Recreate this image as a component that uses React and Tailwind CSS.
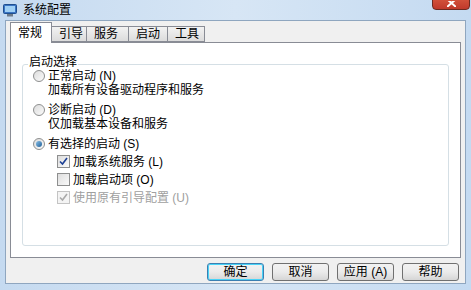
import React, { useState } from "react";

const font = { fontFamily: '"Liberation Sans", "Noto Sans CJK SC", sans-serif' };

const Radio = ({ checked }) => (
  <span className="w-[12px] h-[12px] rounded-full border border-[#8e8f8f] bg-gradient-to-br from-[#dcdcdc] to-[#fbfbfb] flex items-center justify-center shrink-0">
    {checked && <span className="w-[6px] h-[6px] rounded-full bg-gradient-to-br from-[#8ac1e8] to-[#1d5f97]" />}
  </span>
);

const Check = ({ checked, disabled }) => (
  <span
    className={`w-[13px] h-[13px] border ${disabled ? "border-[#c4c4c4] bg-[#f4f4f4]" : "border-[#8e8f8f] bg-gradient-to-br from-[#dedede] to-[#fafafa]"} flex items-center justify-center shrink-0`}
  >
    {checked && (
      <svg width="9" height="9" viewBox="0 0 9 9">
        <path d="M1 4.5 L3.5 7 L8 1" fill="none" stroke={disabled ? "#a9a9a9" : "#1c3f94"} strokeWidth="1.6" />
      </svg>
    )}
  </span>
);

const Button = ({ label, focused }) => (
  <button
    className={`w-[57px] h-[18px] rounded-[3px] border ${focused ? "border-[#3c7fb1] shadow-[inset_0_0_0_1px_#48d3f7]" : "border-[#707070]"} bg-gradient-to-b from-[#f2f2f2] via-[#ebebeb] to-[#d6d6d6] text-[12px] leading-[12px] text-black flex items-center justify-center`}
  >
    {label}
  </button>
);

export default function App() {
  const [mode, setMode] = useState(2);
  const tabs = ["常规", "引导", "服务", "启动", "工具"];

  return (
    <div className="w-[471px] h-[290px] bg-gradient-to-r from-[#c5daf0] via-[#d7e6f5] to-[#c4daf1] flex flex-col relative overflow-hidden" style={font}>
      <div className="h-[20px] flex items-center pl-[3px] gap-[6px] shrink-0">
        <svg width="14" height="13" viewBox="0 0 14 13">
          <rect x="0.5" y="0.5" width="13" height="9" rx="1" fill="#3a75c4" stroke="#1f4f8f" />
          <rect x="2" y="2" width="10" height="6" fill="#9fd0f5" />
          <rect x="4" y="10" width="6" height="2.5" fill="#6c7a8a" />
        </svg>
        <span className="text-[12px] text-black">系统配置</span>
      </div>
      <div className="absolute top-[-10px] right-[1px] w-[38px] h-[20px] rounded-[4px] border border-[#6d2a20] bg-gradient-to-b from-[#e8a593] via-[#d1503a] to-[#c0392b] flex items-end justify-center pb-[2px]">
        <svg width="9" height="6" viewBox="0 0 9 6">
          <path d="M0 -2 L9 6 M9 -2 L0 6" stroke="#fff" strokeWidth="2" />
        </svg>
      </div>

      <div className="flex-1 mx-[5px] border border-[#8fa6bf] bg-[#f0f0f0] flex flex-col px-[4px] pt-[2px]">
        <div className="flex items-end h-[19px] relative z-10">
          {tabs.map((t, i) =>
            i === 0 ? (
              <div key={t} className="h-[21px] pl-[7px] bg-white border border-b-0 border-[#898c95] text-[12px] flex items-center -mb-px w-[42px]">
                {t}
              </div>
            ) : (
              <div
                key={t}
                className="h-[16px] pl-[7px] bg-gradient-to-b from-[#f2f2f2] to-[#dcdcdc] border border-l-0 border-[#898c95] text-[12px] flex items-center"
                style={{ width: [0, 35, 42, 39, 37][i] }}
              >
                {t}
              </div>
            )
          )}
        </div>
        <div className="h-[216px] bg-white border border-[#898c95] px-[11px] pt-[21px]">
          <div className="relative border border-[#d5dfe5] rounded-[3px] h-[182px] px-[10px] pt-[4px]">
            <span className="absolute -top-[9px] left-[5px] bg-white px-[1px] text-[12px] leading-[12px]">启动选择</span>
            <div className="flex flex-col text-[12px] leading-[14px]">
              <div className="flex items-center gap-[3px] h-[14px] cursor-default" onClick={() => setMode(0)}>
                <Radio checked={mode === 0} />
                <span>正常启动 (N)</span>
              </div>
              <span className="pl-[15px] h-[14px]">加载所有设备驱动程序和服务</span>
              <div className="flex items-center gap-[3px] h-[14px] mt-[6px] cursor-default" onClick={() => setMode(1)}>
                <Radio checked={mode === 1} />
                <span>诊断启动 (D)</span>
              </div>
              <span className="pl-[15px] h-[14px]">仅加载基本设备和服务</span>
              <div className="flex items-center gap-[3px] h-[14px] mt-[6px] cursor-default" onClick={() => setMode(2)}>
                <Radio checked={mode === 2} />
                <span>有选择的启动 (S)</span>
              </div>
              <div className="pl-[24px] flex flex-col gap-[5px] mt-[4px]">
                <div className="flex items-center gap-[3px] h-[13px]">
                  <Check checked />
                  <span>加载系统服务 (L)</span>
                </div>
                <div className="flex items-center gap-[3px] h-[13px]">
                  <Check />
                  <span>加载启动项 (O)</span>
                </div>
                <div className="flex items-center gap-[3px] h-[13px] text-[#a0a0a0]">
                  <Check checked disabled />
                  <span>使用原有引导配置 (U)</span>
                </div>
              </div>
            </div>
          </div>
        </div>
        <div className="flex justify-end gap-[8px] pr-[2px] pt-[5px]">
          <Button label="确定" focused />
          <Button label="取消" />
          <Button label="应用 (A)" />
          <Button label="帮助" />
        </div>
      </div>
      <div className="h-[6px] shrink-0" />
    </div>
  );
}
